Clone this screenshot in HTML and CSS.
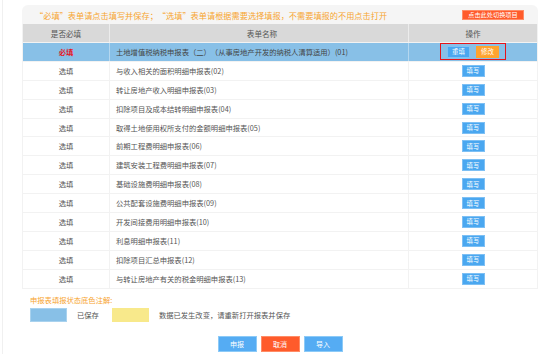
FILE: index.html
```html
<!DOCTYPE html>
<html lang="zh-CN">
<head>
    <meta charset="UTF-8">
    <title>申报表列表</title>
    <link rel="stylesheet" href="styles.css">
</head>
<body>
    <div class="page">
        <div class="card">
            <div class="notice">
                <span class="notice-text">“必填”表单请点击填写并保存；“选填”表单请根据需要选择填报，不需要填报的不用点击打开</span>
                <span class="btn btn-red switch">点击此处切换项目</span>
            </div>
            <div class="table">
                <div class="row head">
                    <div class="c1">是否必填</div>
                    <div class="c2 center">表单名称</div>
                    <div class="c3">操作</div>
                </div>
                <div class="row saved">
                    <div class="c1 must">必填</div>
                    <div class="c2">土地增值税纳税申报表（二）（从事房地产开发的纳税人清算适用）(01)</div>
                    <div class="c3">
                        <div class="ops">
                            <span class="btn btn-blue">重填</span>
                            <span class="btn btn-orange">修改</span>
                        </div>
                    </div>
                </div>
                <div class="row"><div class="c1">选填</div><div class="c2">与收入相关的面积明细申报表(02)</div><div class="c3"><span class="btn btn-blue">填写</span></div></div>
                <div class="row"><div class="c1">选填</div><div class="c2">转让房地产收入明细申报表(03)</div><div class="c3"><span class="btn btn-blue">填写</span></div></div>
                <div class="row"><div class="c1">选填</div><div class="c2">扣除项目及成本结转明细申报表(04)</div><div class="c3"><span class="btn btn-blue">填写</span></div></div>
                <div class="row"><div class="c1">选填</div><div class="c2">取得土地使用权所支付的金额明细申报表(05)</div><div class="c3"><span class="btn btn-blue">填写</span></div></div>
                <div class="row"><div class="c1">选填</div><div class="c2">前期工程费明细申报表(06)</div><div class="c3"><span class="btn btn-blue">填写</span></div></div>
                <div class="row"><div class="c1">选填</div><div class="c2">建筑安装工程费明细申报表(07)</div><div class="c3"><span class="btn btn-blue">填写</span></div></div>
                <div class="row"><div class="c1">选填</div><div class="c2">基础设施费明细申报表(08)</div><div class="c3"><span class="btn btn-blue">填写</span></div></div>
                <div class="row"><div class="c1">选填</div><div class="c2">公共配套设施费明细申报表(09)</div><div class="c3"><span class="btn btn-blue">填写</span></div></div>
                <div class="row"><div class="c1">选填</div><div class="c2">开发间接费用明细申报表(10)</div><div class="c3"><span class="btn btn-blue">填写</span></div></div>
                <div class="row"><div class="c1">选填</div><div class="c2">利息明细申报表(11)</div><div class="c3"><span class="btn btn-blue">填写</span></div></div>
                <div class="row"><div class="c1">选填</div><div class="c2">扣除项目汇总申报表(12)</div><div class="c3"><span class="btn btn-blue">填写</span></div></div>
                <div class="row"><div class="c1">选填</div><div class="c2">与转让房地产有关的税金明细申报表(13)</div><div class="c3"><span class="btn btn-blue">填写</span></div></div>
            </div>

            <div class="legend">
                <div class="legend-title">申报表填报状态底色注解:</div>
                <div class="legend-items">
                    <span class="swatch swatch-blue"></span>
                    <span class="legend-text">已保存</span>
                    <span class="swatch swatch-yellow"></span>
                    <span class="legend-text">数据已发生改变，请重新打开报表并保存</span>
                </div>
            </div>

            <div class="actions">
                <span class="btn big btn-light">申报</span>
                <span class="btn big btn-red">取消</span>
                <span class="btn big btn-light">导入</span>
            </div>
        </div>
    </div>
</body>
</html>
```

FILE: styles.css
```css
body {
    margin: 0;
    padding: 0;
    background-color: #fff;
    color: #555;
    font-family: "Noto Sans CJK SC", "Noto Sans", sans-serif;
    text-spacing-trim: space-all;
}
.page {
    margin-left: 2px;
    border-left: 1px solid #f0f0f0;
    height: 354px;
    padding: 5px 0 0 19px;
    box-sizing: border-box;
}
.card {
    width: 516px;
}
.notice {
    height: 19px;
    background-color: #f5f5f5;
    border-radius: 6px 6px 0 0;
    display: flex;
    align-items: center;
    justify-content: space-between;
    padding: 0 14px 0 13px;
    font-size: 8.2px;
    color: #f7a531;
}
.notice-text {
    white-space: nowrap;
}
.table {
    border-left: 1px solid #f2f2f2;
    border-right: 1px solid #f2f2f2;
}
.row {
    display: grid;
    grid-template-columns: 86px 300px 1fr;
    height: 18.9px;
    border-bottom: 1px solid #f2f2f2;
    box-sizing: border-box;
    font-size: 7.3px;
    color: #555;
}
.row > div {
    display: flex;
    align-items: center;
    white-space: nowrap;
}
.c1, .c3, .center {
    justify-content: center;
}
.c2 {
    padding-left: 6px;
    border-left: 1px solid #f2f2f2;
    border-right: 1px solid #f2f2f2;
}
.head {
    height: 19px;
    background-color: #d9d9d9;
    font-size: 7.6px;
}
.head .c2 {
    border-color: #ececec;
}
.saved {
    background-color: #88c0e7;
    color: #444;
}
.saved .c2 {
    border-color: #b5d7ef;
}
.must {
    color: #e5171f;
    font-weight: bold;
}
.ops {
    display: flex;
    gap: 6px;
    padding: 2px 6px;
    border: 1px solid #e5141b;
    height: 17px;
    box-sizing: border-box;
    align-items: center;
}
.btn {
    display: inline-flex;
    align-items: center;
    justify-content: center;
    color: #fff;
    width: 23px;
    height: 12px;
    font-size: 6.4px;
    box-sizing: border-box;
}
.btn-blue {
    background-color: #4aa7f0;
    border: 1px solid #7ec0f4;
}
.btn-orange {
    background-color: #ffa32e;
}
.btn-red {
    background-color: #ff5b2b;
    border: 1px solid #ff8c66;
}
.btn-light {
    background-color: #55acf3;
    border: 1px solid #8ccaf7;
}
.notice .switch {
    flex-shrink: 0;
    width: 62px;
    height: 10px;
    font-size: 6.2px;
    white-space: nowrap;
}
.legend {
    padding: 7px 0 0 8px;
    font-size: 7.3px;
}
.legend-title {
    color: #f7a531;
    line-height: 9px;
}
.legend-items {
    display: flex;
    align-items: center;
    margin-top: 3px;
    color: #555;
}
.swatch {
    width: 37px;
    height: 14px;
    box-sizing: border-box;
}
.swatch-blue {
    background-color: #88c0e7;
    border: 1px solid #a9d2ee;
}
.swatch-yellow {
    background-color: #f8e98b;
    margin-left: 13px;
}
.legend-text {
    margin-left: 10px;
}
.actions {
    display: flex;
    justify-content: center;
    gap: 4px;
    margin-top: 14px;
}
.actions .big {
    width: 39px;
    height: 16px;
    font-size: 7px;
}
```
